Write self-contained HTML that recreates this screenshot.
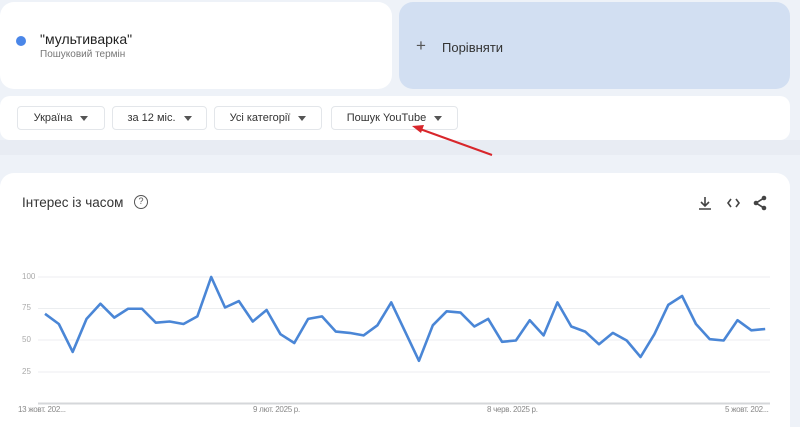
<!DOCTYPE html>
<html><head><meta charset="utf-8"><style>
*{margin:0;padding:0;box-sizing:border-box}
html,body{width:800px;height:427px;overflow:hidden}
body{background:#eef2f8;font-family:"Liberation Sans","Noto Sans CJK SC",sans-serif;position:relative}
.abs{position:absolute}
.card{background:#fff;border-radius:14px}
.dd{position:absolute;top:106px;height:24px;border:1px solid #e3e6ea;border-radius:4px;background:#fff;font-size:11px;color:#333;display:flex;align-items:center;justify-content:center;gap:8px}
.tri{width:0;height:0;border-left:4px solid transparent;border-right:4px solid transparent;border-top:5px solid #555}
.yl{position:absolute;left:22px;font-size:8px;color:#aaa}
.xl{position:absolute;top:405px;font-size:8px;color:#888;letter-spacing:-0.3px}
</style></head><body>
<div class="abs" style="left:0;top:140px;width:800px;height:15px;background:#e8ecf3"></div>
<div class="abs card" style="left:0;top:2px;width:392px;height:87px"></div>
<div class="abs" style="left:16px;top:36px;width:10px;height:10px;border-radius:50%;background:#4a86e8"></div>
<div class="abs" style="left:40px;top:31px;font-size:14px;color:#222">"мультиварка"</div>
<div class="abs" style="left:40px;top:49px;font-size:10px;color:#777">Пошуковий термін</div>
<div class="abs" style="left:399px;top:2px;width:391px;height:87px;background:#d2dff2;border-radius:14px"></div>
<div class="abs" style="left:416px;top:36px;font-size:17px;color:#555;line-height:20px">+</div>
<div class="abs" style="left:442px;top:40px;font-size:13px;color:#333">Порівняти</div>
<div class="abs card" style="left:0;top:96px;width:790px;height:44px;border-radius:10px"></div>
<div class="dd" style="left:17px;width:88px">Україна <span class="tri"></span></div>
<div class="dd" style="left:112px;width:95px">за 12 міс. <span class="tri"></span></div>
<div class="dd" style="left:214px;width:108px">Усі категорії <span class="tri"></span></div>
<div class="dd" style="left:331px;width:127px">Пошук YouTube <span class="tri"></span></div>
<div class="abs card" style="left:0;top:173px;width:790px;height:270px"></div>
<div class="abs" style="left:22px;top:195px;font-size:13.5px;color:#333">Інтерес із часом</div>
<div class="abs" style="left:134px;top:195px;width:14px;height:14px;border:1.5px solid #555;border-radius:50%;font-size:9px;color:#555;text-align:center;line-height:11px">?</div>
<svg class="abs" style="left:0;top:0" width="800" height="427">
<g stroke="#444" stroke-width="1.6" fill="none">
<path d="M705 197v9M701 202l4 4 4-4M699 209h12"/>
<path d="M731 199l-3 4 3 4M736 199l3 4-3 4"/>
<path d="M764 198l-8 5 8 5"/>
</g>
<g fill="#444"><circle cx="764" cy="198" r="2.3"/><circle cx="756" cy="203" r="2.3"/><circle cx="764" cy="208" r="2.3"/></g>
<path d="M492 155L420 129" stroke="#d8262b" stroke-width="2"/>
<path d="M412 126l12-1-3 8z" fill="#d8262b"/>
<g stroke="#eceef0" stroke-width="1"><line x1="38" y1="277" x2="770" y2="277"/><line x1="38" y1="308.5" x2="770" y2="308.5"/><line x1="38" y1="340" x2="770" y2="340"/><line x1="38" y1="372" x2="770" y2="372"/></g>
<line x1="38" y1="403.5" x2="770" y2="403.5" stroke="#d5d7da" stroke-width="2"/>
<polyline fill="none" stroke="#4a86d6" stroke-width="2.6" stroke-linejoin="round" points="45,313.8 58.85,324 72.7,351.9 86.55,318.9 100.4,303.7 114.25,317.6 128.1,308.75 141.95,308.75 155.8,322.7 169.65,321.5 183.5,324 197.35,316.4 211.2,277 225.05,307.5 238.9,301.1 252.75,321.5 266.6,310 280.45,334.2 294.3,343 308.15,318.9 322,316.4 335.85,331.6 349.7,332.9 363.55,335.4 377.4,325.3 391.25,302.4 405.1,331.6 418.95,360.8 432.8,325.3 446.65,311.3 460.5,312.6 474.35,326.5 488.2,318.9 502.05,341.8 515.9,340.5 529.75,320.2 543.6,335.4 557.45,302.4 571.3,326.5 585.15,331.6 599,344.3 612.85,332.9 626.7,340.5 640.55,357 654.4,334.2 668.25,304.9 682.1,296 695.95,324 709.8,339.2 723.65,340.5 737.5,320.2 751.35,330.3 765.2,329"/>
</svg>
<div class="yl" style="top:272px">100</div>
<div class="yl" style="top:303px">75</div>
<div class="yl" style="top:335px">50</div>
<div class="yl" style="top:367px">25</div>
<div class="xl" style="left:18px">13 жовт. 202...</div>
<div class="xl" style="left:253px">9 лют. 2025 р.</div>
<div class="xl" style="left:487px">8 черв. 2025 р.</div>
<div class="xl" style="left:725px">5 жовт. 202...</div>
</body></html>
